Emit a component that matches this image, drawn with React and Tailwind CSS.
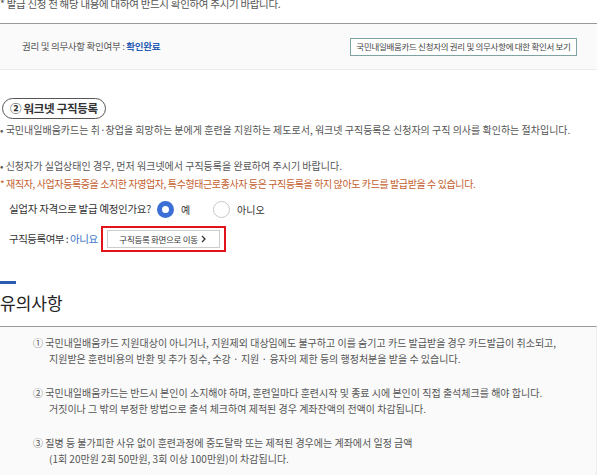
import React from "react";

const font = "font-['Noto_Sans_CJK_KR','Noto_Sans',sans-serif]";

function Radio({ checked, label }) {
  return (
    <label className="flex items-center gap-[7px]">
      {checked ? (
        <span className="w-[17px] h-[17px] rounded-full border-[5px] border-[#3b6fd6] bg-white" />
      ) : (
        <span className="w-[17px] h-[17px] rounded-full border border-[#c8c8c8] bg-white" />
      )}
      <span className="text-[10px] text-[#333]">{label}</span>
    </label>
  );
}

export default function App() {
  return (
    <div className={`w-[597px] h-[475px] overflow-hidden bg-white ${font} text-[#555]`}>
      <p className="mt-[-3px] text-[10.5px] leading-[14px] tracking-[-0.3px] text-[#555]">
        * 발급 신청 전 해당 내용에 대하여 반드시 확인하여 주시기 바랍니다.
      </p>

      <div className="mt-[12px] h-[47px] border-t border-[#999] border-b border-b-[#eee] bg-[#fafafa] flex items-center justify-between pl-[22px] pr-[20px]">
        <div className="text-[9.5px] tracking-[-0.3px] text-[#555]">
          권리 및 의무사항 확인여부 : <b className="text-[#2a5eb4] font-bold">확인완료</b>
        </div>
        <button className="h-[18px] w-[227px] border border-[#7fa3a3] bg-white text-[8.5px] tracking-[-0.3px] text-[#444]">
          국민내일배움카드 신청자의 권리 및 의무사항에 대한 확인서 보기
        </button>
      </div>

      <div className="mt-[28px] ml-[2px] inline-flex items-center h-[21px] px-[7px] rounded-full border border-[#555] text-[11.5px] tracking-[-0.3px] font-bold text-[#333]">
        ② 워크넷 구직등록
      </div>

      <p className="mt-[4px] text-[10px] leading-[14px] text-[#555]">
        • 국민내일배움카드는 취·창업을 희망하는 분에게 훈련을 지원하는 제도로서, 워크넷 구직등록은 신청자의 구직 의사를 확인하는 절차입니다.
      </p>
      <p className="mt-[22px] text-[10px] leading-[14px] text-[#555]">
        • 신청자가 실업상태인 경우, 먼저 워크넷에서 구직등록을 완료하여 주시기 바랍니다.
      </p>
      <p className="mt-[4px] text-[10px] leading-[14px] tracking-[-0.4px] text-[#c4602e]">
        * 재직자, 사업자등록증을 소지한 자영업자, 특수형태근로종사자 등은 구직등록을 하지 않아도 카드를 발급받을 수 있습니다.
      </p>

      <div className="mt-[8px] ml-[9px] flex items-center h-[20px]">
        <span className="text-[10.5px] tracking-[-0.3px] text-[#333] mr-[6px]">실업자 자격으로 발급 예정인가요?</span>
        <Radio checked label="예" />
        <div className="w-[23px]" />
        <Radio label="아니오" />
      </div>

      <div className="mt-[6px] ml-[9px] flex items-center h-[28px]">
        <span className="text-[10.5px] tracking-[-0.5px] text-[#333]">
          구직등록여부 : <span className="text-[#3d74c6]">아니요</span>
        </span>
        <div className="ml-[3px] border-2 border-[#e0141a] px-[4px] py-[2px]">
          <button className="h-[18px] w-[113px] border border-[#ccc] bg-white text-[8.5px] tracking-[-0.3px] text-[#333] flex items-center justify-center gap-[3px]">
            구직등록 화면으로 이동
            <svg width="6" height="8" viewBox="0 0 6 8" fill="none">
              <path d="M1 1l3 3-3 3" stroke="#333" strokeWidth="1.3" />
            </svg>
          </button>
        </div>
      </div>

      <div className="mt-[28px] w-[16px] h-[3px] bg-[#2c5cb2]" />
      <h2 className="mt-[7px] text-[17px] leading-[24px] text-[#222]">유의사항</h2>

      <div className="mt-[11px] border-t border-[#999] bg-[#fafafa] border-r border-r-[#eee] h-[200px] pl-[33px] pt-[8px] text-[10px] leading-[16px] text-[#555]">
        <p>① 국민내일배움카드 지원대상이 아니거나, 지원제외 대상임에도 불구하고 이를 숨기고 카드 발급받을 경우 카드발급이 취소되고,</p>
        <p className="pl-[16px]">지원받은 훈련비용의 반환 및 추가 징수, 수강 · 지원 · 융자의 제한 등의 행정처분을 받을 수 있습니다.</p>
        <p className="mt-[18px]">② 국민내일배움카드는 반드시 본인이 소지해야 하며, 훈련일마다 훈련시작 및 종료 시에 본인이 직접 출석체크를 해야 합니다.</p>
        <p className="pl-[16px]">거짓이나 그 밖의 부정한 방법으로 출석 체크하여 제적된 경우 계좌잔액의 전액이 차감됩니다.</p>
        <p className="mt-[18px]">③ 질병 등 불가피한 사유 없이 훈련과정에 중도탈락 또는 제적된 경우에는 계좌에서 일정 금액</p>
        <p className="pl-[16px]">(1회 20만원 2회 50만원, 3회 이상 100만원)이 차감됩니다.</p>
      </div>
    </div>
  );
}
